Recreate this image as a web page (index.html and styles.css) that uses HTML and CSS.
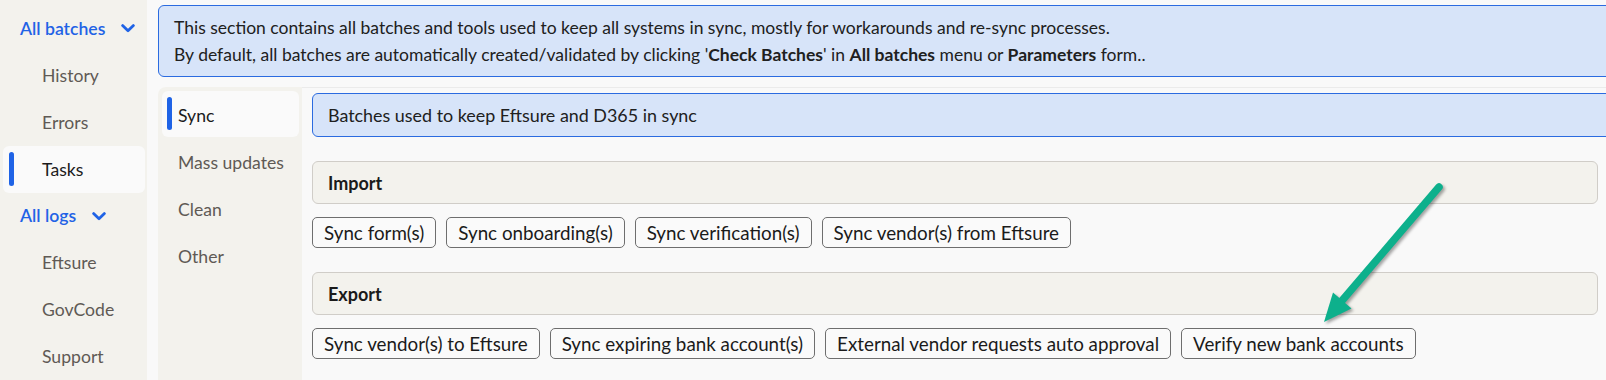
FILE: index.html
```html
<!DOCTYPE html>
<html lang="en">
<head>
<meta charset="utf-8">
<title>Batches</title>
<link rel="stylesheet" href="styles.css">
</head>
<body>
<div class="app">
  <nav class="sidebar">
    <div class="nav-group">All batches
      <svg class="chev" width="14" height="9" viewBox="0 0 14 9"><path d="M1.6 1.6 L7 6.8 L12.4 1.6"/></svg>
    </div>
    <div class="nav-item">History</div>
    <div class="nav-item">Errors</div>
    <div class="nav-item active">Tasks</div>
    <div class="nav-group">All logs
      <svg class="chev" width="14" height="9" viewBox="0 0 14 9"><path d="M1.6 1.6 L7 6.8 L12.4 1.6"/></svg>
    </div>
    <div class="nav-item">Eftsure</div>
    <div class="nav-item">GovCode</div>
    <div class="nav-item">Support</div>
  </nav>
  <main class="main">
    <div class="banner banner-top">
      <p>This section contains all batches and tools used to keep all systems in sync, mostly for workarounds and re-sync processes.</p>
      <p>By default, all batches are automatically created/validated by clicking '<b>Check Batches</b>' in <b>All batches</b> menu or <b>Parameters</b> form..</p>
    </div>
    <div class="tabs">
      <nav class="subnav">
        <div class="sub-item active">Sync</div>
        <div class="sub-item">Mass updates</div>
        <div class="sub-item">Clean</div>
        <div class="sub-item">Other</div>
      </nav>
      <section class="content">
        <div class="banner banner-sub">Batches used to keep Eftsure and D365 in sync</div>
        <div class="group-head">Import</div>
        <div class="btn-row">
          <button class="btn">Sync form(s)</button>
          <button class="btn">Sync onboarding(s)</button>
          <button class="btn">Sync verification(s)</button>
          <button class="btn">Sync vendor(s) from Eftsure</button>
        </div>
        <div class="group-head">Export</div>
        <div class="btn-row">
          <button class="btn">Sync vendor(s) to Eftsure</button>
          <button class="btn">Sync expiring bank account(s)</button>
          <button class="btn">External vendor requests auto approval</button>
          <button class="btn">Verify new bank accounts</button>
        </div>
      </section>
    </div>
  </main>
</div>
<svg class="annot" width="1606" height="380" viewBox="0 0 1606 380">
  <g class="arrow">
    <line x1="1439" y1="187" x2="1340" y2="303"/>
    <polygon points="1324,322 1351.5,308.5 1333,292.5"/>
  </g>
</svg>
</body>
</html>
```
FILE: styles.css
```css
* { box-sizing: border-box; }
html, body { margin: 0; padding: 0; }
body {
  background: #f9f9f9;
  font-family: Lato, "Liberation Sans", sans-serif;
  color: #1f1f1f;
  width: 1606px;
  height: 380px;
  overflow: hidden;
  position: relative;
}
.app { display: flex; height: 380px; }

/* left sidebar */
.sidebar {
  width: 147px;
  flex: none;
  background: #f3f2ed;
  padding: 5px 2px 0 3px;
  display: flex;
  flex-direction: column;
}
.nav-group, .nav-item {
  height: 47px;
  display: flex;
  align-items: center;
  font-size: 17.6px;
  border-radius: 6px;
  position: relative;
}
.nav-group {
  padding-left: 17px;
  color: #1f63e6;
  font-weight: 600;
  gap: 16px;
}
.chev { flex: none; margin-top: 1px; }
.chev path {
  fill: none;
  stroke: #1f63e6;
  stroke-width: 2.8;
  stroke-linecap: round;
  stroke-linejoin: round;
}
.nav-item {
  padding-left: 39px;
  color: #5f5a55;
}
.nav-item.active {
  background: #fafafa;
  color: #1b1b1b;
}
.nav-item.active::before, .sub-item.active::before {
  content: "";
  position: absolute;
  left: 6px;
  top: 6px;
  bottom: 7px;
  width: 5px;
  border-radius: 3px;
  background: #1f63e6;
}

/* main */
.main {
  flex: 1;
  display: flex;
  flex-direction: column;
  padding-left: 11px;
  min-width: 0;
}
.banner {
  background: #d7e4f9;
  border: 1px solid #2b6be0;
  border-radius: 6px;
  color: #202020;
}
.banner-top {
  margin-top: 5px;
  margin-right: -6px;
  padding: 8px 15px 8px 15px;
  font-size: 17.5px;
}
.banner-top p { margin: 0; line-height: 27px; }
.banner-top b { font-weight: 700; }

.tabs {
  flex: 1;
  display: flex;
  margin-top: 10px;
  min-height: 0;
}
.subnav {
  width: 144px;
  flex: none;
  background: #f3f2ed;
  border-top-left-radius: 8px;
  padding: 4px 3px 0 4px;
  display: flex;
  flex-direction: column;
}
.sub-item {
  height: 47px;
  display: flex;
  align-items: center;
  padding: 3px 0 0 16px;
  font-size: 17.6px;
  color: #5f5a55;
  border-radius: 6px;
  position: relative;
}
.sub-item.active {
  background: #fafafa;
  color: #1b1b1b;
  height: 46px;
  padding-top: 2px;
}
.sub-item.active::before { left: 5px; }

.content {
  flex: 1;
  border-top: 1px solid #ebebeb;
  padding: 5px 8px 0 10px;
  display: flex;
  flex-direction: column;
  min-width: 0;
}
.banner-sub {
  height: 44px;
  margin-right: -14px;
  padding: 0 15px;
  display: flex;
  align-items: center;
  font-size: 17.9px;
}
.group-head {
  margin-top: 24px;
  height: 43px;
  background: #f3f2ed;
  border: 1px solid #d0cdc8;
  border-radius: 6px;
  padding: 0 15px;
  display: flex;
  align-items: center;
  font-weight: 700;
  font-size: 18px;
  color: #1a1a1a;
}
.btn-row {
  margin-top: 13px;
  display: flex;
  gap: 10px;
}
.btn {
  height: 31px;
  padding: 0 11px;
  background: #fafafa;
  border: 1px solid #6e6e6e;
  border-radius: 5px;
  font-family: Lato, "Liberation Sans", sans-serif;
  font-size: 18.8px;
  color: #1b1b1b;
  line-height: 29px;
}

/* annotation arrow */
.annot {
  position: absolute;
  left: 0;
  top: 0;
  pointer-events: none;
}
.arrow { filter: drop-shadow(2px 2px 1.5px rgba(0,0,0,0.35)); }
.arrow line {
  stroke: #0db08c;
  stroke-width: 7.5;
  stroke-linecap: round;
}
.arrow polygon { fill: #0db08c; }
```
